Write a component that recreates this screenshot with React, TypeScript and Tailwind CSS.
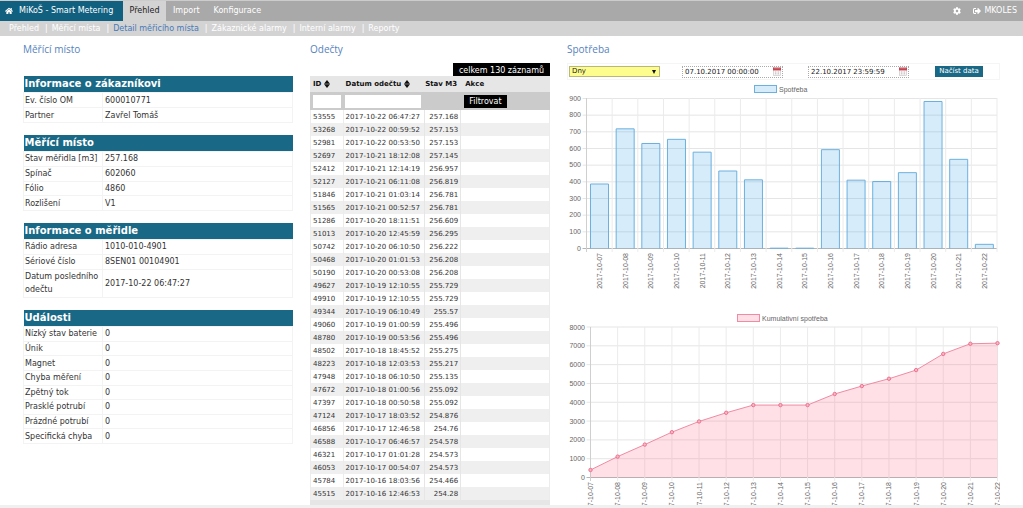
import React from 'react';
import { FaHome, FaCog, FaSignOutAlt } from 'react-icons/fa';

type Info = { title: string; height: string; rows: [string, string][] };

const INFO: Info[] = [
  {
    title: 'Informace o zákazníkovi',
    height: 'h-[47px]',
    rows: [
      ['Ev. číslo OM', '600010771'],
      ['Partner', 'Zavřel Tomáš'],
    ],
  },
  {
    title: 'Měřící místo',
    height: 'h-[76px]',
    rows: [
      ['Stav měřidla [m3]', '257.168'],
      ['Spínač', '602060'],
      ['Fólio', '4860'],
      ['Rozlišení', 'V1'],
    ],
  },
  {
    title: 'Informace o měřidle',
    height: 'h-[75px]',
    rows: [
      ['Rádio adresa', '1010-010-4901'],
      ['Sériové číslo', '8SEN01 00104901'],
      ['Datum posledního odečtu', '2017-10-22 06:47:27'],
    ],
  },
  {
    title: 'Události',
    height: 'h-[134px]',
    rows: [
      ['Nízký stav baterie', '0'],
      ['Únik', '0'],
      ['Magnet', '0'],
      ['Chyba měření', '0'],
      ['Zpětný tok', '0'],
      ['Prasklé potrubí', '0'],
      ['Prázdné potrubí', '0'],
      ['Specifická chyba', '0'],
    ],
  },
];

const READINGS: [string, string, string][] = [
  ['53555', '2017-10-22 06:47:27', '257.168'],
  ['53268', '2017-10-22 00:59:52', '257.153'],
  ['52981', '2017-10-22 00:53:50', '257.153'],
  ['52697', '2017-10-21 18:12:08', '257.145'],
  ['52412', '2017-10-21 12:14:19', '256.957'],
  ['52127', '2017-10-21 06:11:08', '256.819'],
  ['51846', '2017-10-21 01:03:14', '256.781'],
  ['51565', '2017-10-21 00:52:57', '256.781'],
  ['51286', '2017-10-20 18:11:51', '256.609'],
  ['51013', '2017-10-20 12:45:59', '256.295'],
  ['50742', '2017-10-20 06:10:50', '256.222'],
  ['50468', '2017-10-20 01:01:53', '256.208'],
  ['50190', '2017-10-20 00:53:08', '256.208'],
  ['49627', '2017-10-19 12:10:55', '255.729'],
  ['49910', '2017-10-19 12:10:55', '255.729'],
  ['49344', '2017-10-19 06:10:49', '255.57'],
  ['49060', '2017-10-19 01:00:59', '255.496'],
  ['48780', '2017-10-19 00:53:56', '255.496'],
  ['48502', '2017-10-18 18:45:52', '255.275'],
  ['48223', '2017-10-18 12:03:53', '255.217'],
  ['47948', '2017-10-18 06:10:50', '255.135'],
  ['47672', '2017-10-18 01:00:56', '255.092'],
  ['47397', '2017-10-18 00:50:58', '255.092'],
  ['47124', '2017-10-17 18:03:52', '254.876'],
  ['46856', '2017-10-17 12:46:58', '254.76'],
  ['46588', '2017-10-17 06:46:57', '254.578'],
  ['46321', '2017-10-17 01:01:28', '254.573'],
  ['46053', '2017-10-17 00:54:07', '254.573'],
  ['45784', '2017-10-16 18:03:56', '254.466'],
  ['45515', '2017-10-16 12:46:53', '254.28'],
];

const DAYS = ['07', '08', '09', '10', '11', '12', '13', '14', '15', '16', '17', '18', '19', '20', '21', '22'];
const DAILY = [387, 718, 630, 655, 578, 465, 412, 2, 2, 593, 410, 402, 455, 882, 535, 25];
const TOTAL = [400, 1110, 1750, 2410, 2980, 3440, 3850, 3850, 3850, 4440, 4860, 5250, 5710, 6570, 7110, 7140];

const SUBNAV = ['Přehled', 'Měřicí místa', 'Detail měřicího místa', 'Zákaznické alarmy', 'Interní alarmy', 'Reporty'];

function SortIcon() {
  return (
    <svg viewBox="0 0 6 8" className="ml-[3px] inline-block h-2 w-1.5 align-[-2px]" aria-hidden="true">
      <path d="M3 0L6 3.7H0zM0 4.3H6L3 8z" fill="#111" />
    </svg>
  );
}

function CalendarIcon() {
  return (
    <svg viewBox="0 0 8 9" className="h-[9px] w-2 shrink-0" aria-hidden="true">
      <rect x="0.5" y="0.5" width="7" height="8" fill="#f6f6f6" stroke="#c4c0c0" strokeWidth="0.6" />
      <rect x="0" y="0.6" width="8" height="2.8" fill="#c8434f" />
      <path d="M2 0v1.6M4 0v1.6M6 0v1.6" stroke="#f3d4d6" strokeWidth="0.6" />
      <path d="M2 5h1.3M4.7 5H6M2 6.8h1.3M4.7 6.8H6" stroke="#b8a8a8" strokeWidth="0.8" />
    </svg>
  );
}

function DateField({ label, value }: { label: string; value: string }) {
  return (
    <div className="flex h-3 w-[101px] items-center border border-dotted border-[#aaa] bg-white pr-px">
      <input
        aria-label={label}
        defaultValue={value}
        className="h-[10px] min-w-0 flex-1 bg-transparent pl-0.5 text-[7px] leading-[10px] text-[#222] outline-none"
      />
      <CalendarIcon />
    </div>
  );
}

function DailyChart() {
  const step = 410.5 / 16;
  const y = (v: number) => 165 - (v * 150) / 900;
  return (
    <svg viewBox="0 0 433 226" className="block w-full" role="img" aria-label="Graf spotřeby" fontFamily="'Liberation Sans', sans-serif" fontSize="7" fill="#666">
      <rect x="187.5" y="2.5" width="22" height="7" fill="#d7ecfb" stroke="#6bb0de" />
      <text x="212" y="8.5">Spotřeba</text>
      {Array.from({ length: 10 }, (_, i) => i * 100).map((v) => (
        <g key={v}>
          <line x1="15.5" x2="430" y1={y(v) + 0.5} y2={y(v) + 0.5} stroke={v ? '#e5e5e5' : '#b5b5b5'} />
          <text x="14" y={y(v) + 2.5} textAnchor="end">{v}</text>
        </g>
      ))}
      {Array.from({ length: 17 }, (_, i) => (
        <line key={i} x1={19.5 + i * step} x2={19.5 + i * step} y1="15" y2="169" stroke={i ? '#ebebeb' : '#cfcfcf'} />
      ))}
      {DAILY.map((v, i) => (
        <g key={DAYS[i]}>
          <path
            d={`M${23.5 + i * step} 165.5V${y(v) + 0.5}h18V165.5`}
            fill="#36a2eb"
            fillOpacity="0.2"
            stroke="#6bb0de"
          />
          <text transform={`translate(${35 + i * step} 170) rotate(-90)`} textAnchor="end">{`2017-10-${DAYS[i]}`}</text>
        </g>
      ))}
    </svg>
  );
}

function TotalChart() {
  const step = 407 / 15;
  const x = (i: number) => 23.5 + i * step;
  const y = (v: number) => 168.5 - (v * 150.5) / 8000;
  const line = TOTAL.map((v, i) => `${x(i)} ${y(v)}`).join('L');
  return (
    <svg viewBox="0 0 433 212" className="block w-full" role="img" aria-label="Graf kumulativní spotřeby" fontFamily="'Liberation Sans', sans-serif" fontSize="7" fill="#666">
      <rect x="170.5" y="5.5" width="22" height="7" fill="#ffe0e6" stroke="#f08ba3" />
      <text x="195" y="11.5">Kumulativní spotřeba</text>
      {Array.from({ length: 9 }, (_, i) => i * 1000).map((v) => (
        <g key={v}>
          <line x1="19.5" x2="430.5" y1={y(v)} y2={y(v)} stroke={v ? '#e5e5e5' : '#b5b5b5'} />
          <text x="18" y={y(v) + 2.5} textAnchor="end">{v}</text>
        </g>
      ))}
      {TOTAL.map((_, i) => (
        <line key={i} x1={x(i)} x2={x(i)} y1="18" y2="172" stroke={i ? '#ebebeb' : '#cfcfcf'} />
      ))}
      <path d={`M${x(0)} 168.5L${line}L${x(15)} 168.5z`} fill="#ff6384" fillOpacity="0.2" />
      <path d={`M${line}`} fill="none" stroke="#f08ba3" />
      {TOTAL.map((v, i) => (
        <g key={DAYS[i]}>
          <circle cx={x(i)} cy={y(v)} r="1.7" fill="#f9b4c3" stroke="#ea6a88" strokeWidth="0.9" />
          <text transform={`translate(${x(i) + 2.5} 173) rotate(-90)`} textAnchor="end">{`2017-10-${DAYS[i]}`}</text>
        </g>
      ))}
    </svg>
  );
}

function Heading({ children }: { children: React.ReactNode }) {
  return <h2 className="h-[27px] pt-[5px] font-['Open_Sans',sans-serif] text-[10px] leading-4 text-[#5583bd]">{children}</h2>;
}

export default function App() {
  return (
    <div className="flex h-screen flex-col overflow-hidden bg-white font-['DejaVu_Sans',Verdana,sans-serif] text-[8px] text-[#333]">
      <header className="shrink-0">
        <nav className="flex h-[21px] items-stretch border-t border-[#ccc] bg-[#a9a9a9] text-white">
          <a href="#" className="flex w-[123px] items-center gap-1.5 bg-[#11607f] pl-[5px] whitespace-nowrap">
            <FaHome className="size-2" />
            MiKoŠ - Smart Metering
          </a>
          <a href="#" className="flex w-[43px] items-center justify-center bg-[#d3d3d3] text-[#222]">Přehled</a>
          <a href="#" className="flex items-center pl-[7px]">Import</a>
          <a href="#" className="flex items-center pl-[14px]">Konfigurace</a>
          <a href="#" aria-label="Nastavení" className="ml-auto flex items-center">
            <FaCog className="size-2" />
          </a>
          <a href="#" className="flex items-center gap-[3px] pr-1.5 pl-3">
            <FaSignOutAlt className="size-2" />
            MKOLES
          </a>
        </nav>
        <nav className="flex h-[15px] items-center bg-[#d3d3d3] pl-[9px] text-white">
          {SUBNAV.map((item, i) => (
            <React.Fragment key={item}>
              {i > 0 && <span className="pr-1 pl-1.5">|</span>}
              <a href="#" className={i === 2 ? 'text-[#4779b8]' : 'text-white'}>{item}</a>
            </React.Fragment>
          ))}
        </nav>
      </header>

      <main className="grid min-h-0 flex-1 grid-cols-[270fr_240fr_433fr] gap-x-[17px] overflow-hidden px-[23px]">
        <section>
          <Heading>Měřící místo</Heading>
          <div className="flex flex-col gap-3 pt-[13px]">
            {INFO.map((block) => (
              <table key={block.title} className={`w-full table-fixed border-collapse ${block.height}`}>
                <colgroup>
                  <col className="w-[79px]" />
                  <col />
                </colgroup>
                <thead>
                  <tr className="h-4 bg-[#196886]">
                    <th colSpan={2} className="pl-px text-left text-[10px] leading-4 font-bold text-white">{block.title}</th>
                  </tr>
                </thead>
                <tbody>
                  {block.rows.map(([name, value]) => (
                    <tr key={name}>
                      <th scope="row" className="border border-[#f3f3f3] pl-px text-left leading-[13px] font-normal">{name}</th>
                      <td className="border border-[#f3f3f3] pl-0.5 leading-[13px]">{value}</td>
                    </tr>
                  ))}
                </tbody>
              </table>
            ))}
          </div>
        </section>

        <section>
          <Heading>Odečty</Heading>
          <div className="flex justify-end">
            <span className="h-[13px] bg-black px-1.5 leading-4 text-white">celkem 130 záznamů</span>
          </div>
          <table className="w-full table-fixed border-separate border-spacing-0 text-[7px] leading-3">
            <thead>
              <tr className="h-4 bg-[#e6e6e6] text-left text-[#111]">
                <th className="w-[14%] pl-[3px]">ID<SortIcon /></th>
                <th className="w-[34%] pl-0.5 whitespace-nowrap">Datum odečtu<SortIcon /></th>
                <th className="w-[15%] pr-1 text-right whitespace-nowrap">Stav M3</th>
                <th className="w-[37%] pl-1">Akce</th>
              </tr>
              <tr className="h-[18px] bg-[#cbcbcb]">
                <td className="px-[3px]"><input aria-label="Filtr ID" className="block h-[13px] w-full bg-white" /></td>
                <td className="px-px"><input aria-label="Filtr data odečtu" className="block h-[13px] w-[76px] bg-white" /></td>
                <td />
                <td className="pl-[3px]"><button type="button" className="block h-[13px] bg-black px-[5px] text-[8px] leading-[13px] text-white">Filtrovat</button></td>
              </tr>
            </thead>
            <tbody>
              {READINGS.map(([id, date, value], i) => (
                <tr key={id} className={i % 2 ? 'h-[13px] bg-[#efefef]' : 'h-[13px] bg-white'}>
                  <td className="border-r border-l border-[#ececec] pl-0.5">{id}</td>
                  <td className="border-r border-[#e6e6e6] pl-0.5 whitespace-nowrap">{date}</td>
                  <td className="border-r border-[#e6e6e6] pr-0.5 text-right">{value}</td>
                  <td className="border-r border-[#ececec]" />
                </tr>
              ))}
            </tbody>
            <tfoot>
              <tr className="h-4 bg-[#e6e6e6]"><td colSpan={4} /></tr>
            </tfoot>
          </table>
        </section>

        <section>
          <Heading>Spotřeba</Heading>
          <form className="flex h-[17px] items-center border border-[#f5f5f5] pl-px">
            <div className="relative w-[91px]">
              <select aria-label="Období" className="block h-[11px] w-full appearance-none border border-[#b9b77c] bg-[#fdfd8e] pl-0.5 text-[7px] leading-[9px] text-[#222]">
                <option>Dny</option>
                <option>Měsíce</option>
              </select>
              <svg viewBox="0 0 4 4" className="pointer-events-none absolute top-1 right-1 size-1" aria-hidden="true">
                <path d="M0 0h4L2 4z" fill="#111" />
              </svg>
            </div>
            <div className="ml-[22px] flex gap-[25px]">
              <DateField label="Od" value="07.10.2017 00:00:00" />
              <DateField label="Do" value="22.10.2017 23:59:59" />
            </div>
            <button type="button" className="ml-[26px] h-[11px] w-12 bg-[#196886] text-[7px] leading-[11px] whitespace-nowrap text-white">Načíst data</button>
          </form>
          <div className="pt-[3px]">
            <DailyChart />
            <TotalChart />
          </div>
        </section>
      </main>
      <div className="h-[3px] shrink-0 bg-[#f0f0f0]" />
    </div>
  );
}
